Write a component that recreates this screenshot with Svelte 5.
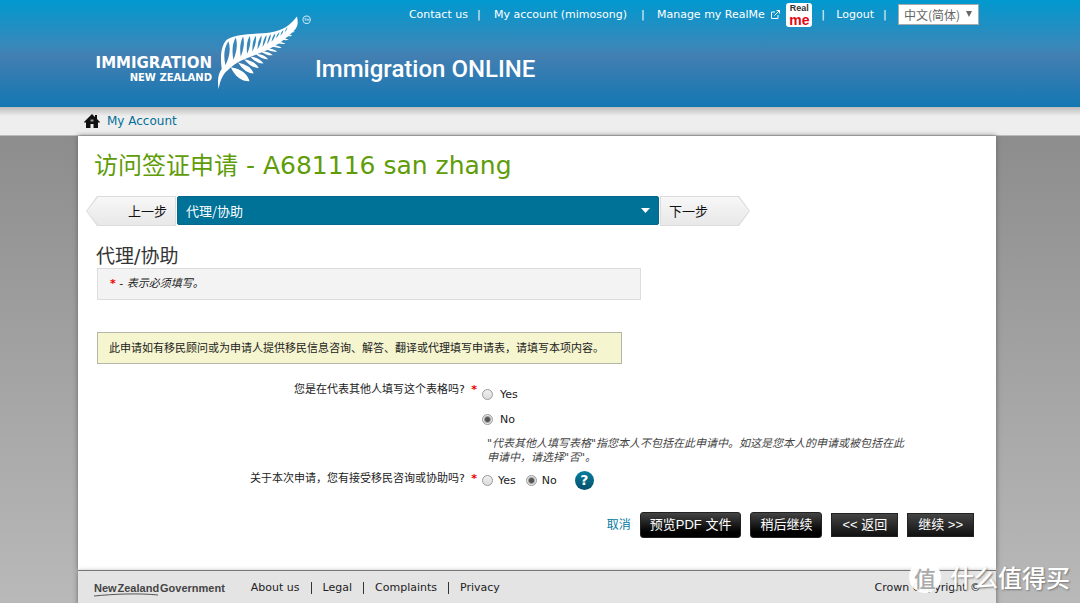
<script lang="ts">
	let language = $state('zh');
	let section = $state('agent');
	let onBehalf = $state('no');
	let advised = $state('no');

	// leaf shape between two points, w = how far the sides bulge
	function leaf([x1, y1, x2, y2, w]: number[]) {
		const len = Math.hypot(x2 - x1, y2 - y1);
		const nx = (-(y2 - y1) / len) * w;
		const ny = ((x2 - x1) / len) * w;
		const cx = x1 + (x2 - x1) * 0.6;
		const cy = y1 + (y2 - y1) * 0.6;
		return `M${x1} ${y1}Q${cx + nx} ${cy + ny} ${x2} ${y2}Q${cx - nx} ${cy - ny} ${x1} ${y1}Z`;
	}

	const gaps = [
		[466, 196, 475, 124, 15], [490, 180, 497, 113, 12], [512, 170, 519, 110, 10], [531, 162, 539, 109, 9],
		[547, 155, 557, 108, 8], [562, 149, 574, 107, 7], [577, 142, 589, 106, 6], [591, 134, 602, 103, 5],
		[604, 126, 615, 101, 5], [617, 117, 628, 96, 4], [630, 108, 640, 90, 4], [643, 98, 652, 82, 3]
	].map(leaf).join('');
	const fronds = [
		[482, 202, 538, 244, 22], [504, 188, 551, 221, 15], [522, 178, 566, 204, 12], [540, 170, 580, 191, 11],
		[556, 162, 594, 178, 9], [571, 154, 608, 166, 8], [585, 146, 621, 155, 7], [599, 136, 634, 144, 6],
		[612, 126, 646, 132, 6], [625, 116, 656, 120, 5], [638, 106, 666, 108, 5], [650, 95, 674, 96, 4]
	].map(leaf).join('');
	const blade =
		'M455 207C451 175 451 140 470 120C500 100 560 104 600 98C640 91 660 76 680 50C686 75 680 86 665 99C640 124 610 142 580 156C545 171 505 178 472 212C456 226 450 245 446 267C441 240 445 220 455 207Z';
</script>

<div class="page">
	<header>
		<div class="brand">
			<a class="logo" href="/">
				<span class="words"><b>IMMIGRATION</b><small>NEW ZEALAND</small></span>
				<svg width="97" height="77" viewBox="435 40 290 230" aria-hidden="true">
					<path d={blade + gaps} fill="#fff" fill-rule="evenodd" />
					<path d={fronds} fill="#fff" />
					<circle cx="709" cy="60" r="11" fill="none" stroke="#d5eaf5" stroke-width="3" />
					<path d="M702 57h6M705 57v7M710 64v-7l3 4 3-4v7" fill="none" stroke="#d5eaf5" stroke-width="2" />
				</svg>
			</a>
			<span class="product">Immigration ONLINE</span>
		</div>
		<nav class="top">
			<a href="/contact">Contact us</a><i class="first">|</i>
			<a href="/account">My account (mimosong)</a><i class="wide">|</i>
			<a href="/realme">Manage my RealMe
				<svg width="9" height="9" viewBox="0 0 9 9" fill="none" stroke="#fff"><path d="M4 2H.5v6.500H7V5M3.500 5.500l5-5M5.500.500h3v3" /></svg>
			</a>
			<a class="realme" href="/realme"><span>Real</span><b>me</b></a><i>|</i>
			<a href="/logout">Logout</a><i>|</i>
			<label class="lang">
				<select aria-label="Language" bind:value={language}>
					<option value="zh">中文(简体)</option>
					<option value="en">English</option>
				</select>
				<svg width="6" height="6" viewBox="0 0 6 6"><path d="M0 0h6L3 6z" fill="#666" /></svg>
			</label>
		</nav>
	</header>

	<div class="crumbs">
		<svg width="16" height="14" viewBox="0 0 16 14" fill="#111"><path d="M8 0l3 3V1h2v4l3 3-1 1-1-1v6H9.500v-4h-3v4H2V8L1 9 0 8z" /><path d="M6.500 5.500h3v2h-3z" fill="#999" /></svg>
		<a href="/account">My Account</a>
	</div>

	<main>
		<h1><span>访问签证申请</span> - A681116 san zhang</h1>

		<div class="steps">
			<button class="step prev" type="button"><span>上一步</span></button>
			<label class="section">
				<select aria-label="Section" bind:value={section}>
					<option value="agent">代理/协助</option>
				</select>
				<svg width="9" height="5" viewBox="0 0 9 5"><path d="M0 0h9L4.500 5z" fill="#fff" /></svg>
			</label>
			<button class="step next" type="button"><span>下一步</span></button>
		</div>

		<h2>代理/协助</h2>
		<p class="required"><span class="star">*</span> - <em>表示必须填写。</em></p>
		<p class="notice">此申请如有移民顾问或为申请人提供移民信息咨询、解答、翻译或代理填写申请表，请填写本项内容。</p>

		<form>
			<div class="row" role="radiogroup" aria-labelledby="q-behalf">
				<div class="question" id="q-behalf">您是在代表其他人填写这个表格吗? <span class="star">*</span></div>
				<div class="answers stacked">
					<label><input type="radio" name="behalf" value="yes" bind:group={onBehalf} />Yes</label>
					<label><input type="radio" name="behalf" value="no" bind:group={onBehalf} />No</label>
					<p class="hint">"代表其他人填写表格"指您本人不包括在此申请中。如这是您本人的申请或被包括在此申请中，请选择"否"。</p>
				</div>
			</div>
			<div class="row" role="radiogroup" aria-labelledby="q-advice">
				<div class="question" id="q-advice">关于本次申请，您有接受移民咨询或协助吗? <span class="star">*</span></div>
				<div class="answers inline">
					<label><input type="radio" name="advice" value="yes" bind:group={advised} />Yes</label>
					<label><input type="radio" name="advice" value="no" bind:group={advised} />No</label>
					<button class="help" type="button" aria-label="Help">?</button>
				</div>
			</div>
			<div class="actions">
				<a href="/account">取消</a>
				<button class="round" type="button">预览PDF 文件</button>
				<button class="round" type="button">稍后继续</button>
				<button type="button">&lt;&lt; 返回</button>
				<button type="button">继续 &gt;&gt;</button>
			</div>
		</form>
	</main>

	<footer>
		<a class="govt" href="/govt">New&#8202;Zealand&#8202;Government
			<svg width="64" height="4" viewBox="0 0 64 4" fill="none" stroke="#555"><path d="M0 3C20 1 44 0 64 2" /></svg>
		</a>
		<nav>
			<a href="/about">About us</a>
			<a href="/legal">Legal</a>
			<a href="/complaints">Complaints</a>
			<a href="/privacy">Privacy</a>
		</nav>
		<span class="copy">Crown Copyright ©</span>
	</footer>

	<div class="watermark"><span>值</span>什么值得买</div>
</div>

<style>
	:global(body) { margin: 0; }
	.page { position: relative; display: flex; flex-direction: column; min-height: 100vh; overflow: hidden; background: linear-gradient(#808080, #b9b9b9); font: 11px/14px "DejaVu Sans", "Noto Sans CJK SC", sans-serif; color: #222; }
	a { color: inherit; text-decoration: none; }
	p, h1, h2 { margin: 0; font-weight: 400; }
	button, select, input { font: inherit; margin: 0; box-sizing: border-box; }
	button { cursor: pointer; }

	header { display: grid; min-height: 107px; background: linear-gradient(#0099cf, #3c86b8 46%, #437fb2 52%, #1377b2); color: #fff; }
	.brand, .top { grid-area: 1 / 1; }
	.brand { display: flex; align-items: flex-start; padding: 13px 0 0 92px; }
	.logo { display: flex; gap: 3px; }
	.words { display: flex; flex-direction: column; align-items: flex-end; min-width: 120px; padding-top: 42px; }
	.words b { font-size: 15px; line-height: 17px; }
	.words small { font-size: 10px; line-height: 12px; font-weight: 700; }
	.product { margin: 34px 0 0 3px; font: 500 24px/44px Roboto, "Liberation Sans", sans-serif; }
	.top { display: flex; align-items: center; align-self: start; justify-self: end; height: 29px; margin-right: 101px; white-space: nowrap; z-index: 1; }
	.top i { width: 4px; margin: 0 11px 0 9px; font-style: normal; }
	.top i.first { margin-right: 13px; }
	.top i.wide { margin: 0 12px 0 14px; }
	.top a svg { margin-left: 3px; vertical-align: -1px; }
	.realme { display: flex; flex-direction: column; align-items: center; width: 26px; height: 24px; margin-left: 6px; border-radius: 3px; background: #fff; font-family: "Liberation Sans", sans-serif; }
	.realme span { color: #333; font-size: 9px; line-height: 11px; font-weight: 700; }
	.realme b { color: #e30613; font-size: 14px; line-height: 13px; font-weight: 700; }
	.lang { position: relative; }
	.lang select { appearance: none; display: block; width: 81px; height: 21px; padding: 0 5px; border: 1px solid #aaa; border-radius: 0; background: #fff; color: #666; font: 12px/18px "Noto Sans CJK SC", sans-serif; }
	.lang svg { position: absolute; right: 7px; top: 7px; }

	.crumbs { display: flex; align-items: center; gap: 7px; min-height: 28px; padding-left: 84px; border-bottom: 1px solid #bbb; background: linear-gradient(#bbb, #eee 9px); color: #036f97; font-size: 12px; }

	main { margin: 0 84px 0 78px; padding: 14px 22px 32px 8px; background: #fff; box-shadow: 0 0 5px #666; }
	h1 { margin-left: 8px; color: #5f9c09; font-size: 25px; line-height: 32px; }
	h1 span { font-size: 24px; }
	.steps { display: flex; margin-top: 14px; max-width: 664px; height: 30px; }
	.step { width: 90px; padding: 0; border: 0; background: #dcdcdc; color: #111; font: 13px/28px "Noto Sans CJK SC", sans-serif; }
	.step span { display: block; margin: 1px; background: linear-gradient(#f7f7f7, #e8e8e8); }
	.prev, .prev span { clip-path: polygon(11px 0, 100% 0, 100% 100%, 11px 100%, 0 50%); }
	.next, .next span { clip-path: polygon(0 0, calc(100% - 11px) 0, 100% 50%, calc(100% - 11px) 100%, 0 100%); }
	.prev { text-align: right; }
	.prev span { padding-right: 8px; }
	.next { text-align: left; }
	.next span { padding-left: 8px; }
	.section { position: relative; flex: 1; margin: 0 1px; }
	.section select { appearance: none; display: block; width: 100%; height: 29px; padding: 0 8px; border: 1px solid #05678a; border-radius: 2px; background: #007298; color: #fff; font: 13px/27px "Noto Sans CJK SC", sans-serif; }
	.section svg { position: absolute; right: 9px; top: 12px; }

	h2 { margin: 18px 0 0 10px; font-size: 19px; line-height: 24px; color: #333; }
	.required, .notice { box-sizing: border-box; margin-left: 11px; padding: 8px 12px; line-height: 14px; border: 1px solid #ddd; }
	.required { max-width: 544px; min-height: 32px; background: #f3f3f3; }
	.notice { width: fit-content; min-height: 32px; margin-top: 32px; border-color: #b5b5a8; background: #f5f5cf; padding: 9px 17px 7px 11px; }
	.star { color: #e00; font-weight: 700; }

	.row { display: grid; grid-template-columns: 391px 1fr; gap: 5px; }
	.row:first-child { margin-top: 18px; }
	.question { padding-top: 1px; text-align: right; }
	.question .star { margin-left: 3px; }
	.answers label { display: flex; align-items: center; gap: 7px; color: #222; }
	.stacked label { height: 25px; }
	input[type='radio'] { appearance: none; width: 11px; height: 11px; border: 1px solid #999; border-radius: 50%; background: linear-gradient(#eee, #ddd); }
	input:checked { background: radial-gradient(circle, #555 0 2px, #e8e8e8 4px); }
	.hint { max-width: 424px; padding-left: 5px; margin-top: 5px; font-style: italic; color: #444; }
	.inline { display: flex; align-items: center; gap: 10px; }
	.inline label { gap: 5px; }
	.row:nth-child(2) { margin-top: 6px; }
	.help { width: 19px; height: 19px; margin-left: 8px; padding: 0; border: 0; border-radius: 50%; background: linear-gradient(#087f9f, #04506a); color: #fff; font-size: 14px; font-weight: 700; line-height: 19px; }

	.actions { display: flex; justify-content: flex-end; align-items: center; gap: 9px; margin-top: 22px; font: 12px/24px "Liberation Sans", "Noto Sans CJK SC", sans-serif; }
	.actions a { color: #057aa0; }
	.actions button { height: 24px; padding: 0 10px; border: 1px solid #222; background: linear-gradient(#444, #111); color: #fff; font-size: 13px; line-height: 20px; }
	.actions .round { height: 26px; padding: 0 9px; border-radius: 3px; background: linear-gradient(#444, #000 80%); }

	footer { display: flex; flex: 1; align-items: center; min-height: 32px; margin: 0 84px 0 78px; padding: 1px 15px 0 16px; border-top: 1px solid #777; background: #e4e4e4; box-shadow: 0 2px 5px #666; }
	.govt { position: relative; color: #444; font: 700 11px/14px "Liberation Sans", sans-serif; }
	.govt svg { position: absolute; left: 0; top: 12px; }
	footer nav { display: flex; margin-left: 15px; }
	footer nav a { padding: 0 11px; line-height: 12px; border-left: 1px solid #333; }
	footer nav a:first-child { border: 0; }
	.copy { margin-left: auto; }

	.watermark { position: absolute; right: 10px; bottom: 11px; display: flex; align-items: center; gap: 9px; color: #fff; font: 500 24px/32px "Noto Sans CJK SC", sans-serif; text-shadow: 1px 1px 2px #777; }
	.watermark span { width: 32px; height: 32px; border-radius: 50%; background: #fffffff0; color: #aaa; text-align: center; font-size: 22px; text-shadow: none; }
</style>
